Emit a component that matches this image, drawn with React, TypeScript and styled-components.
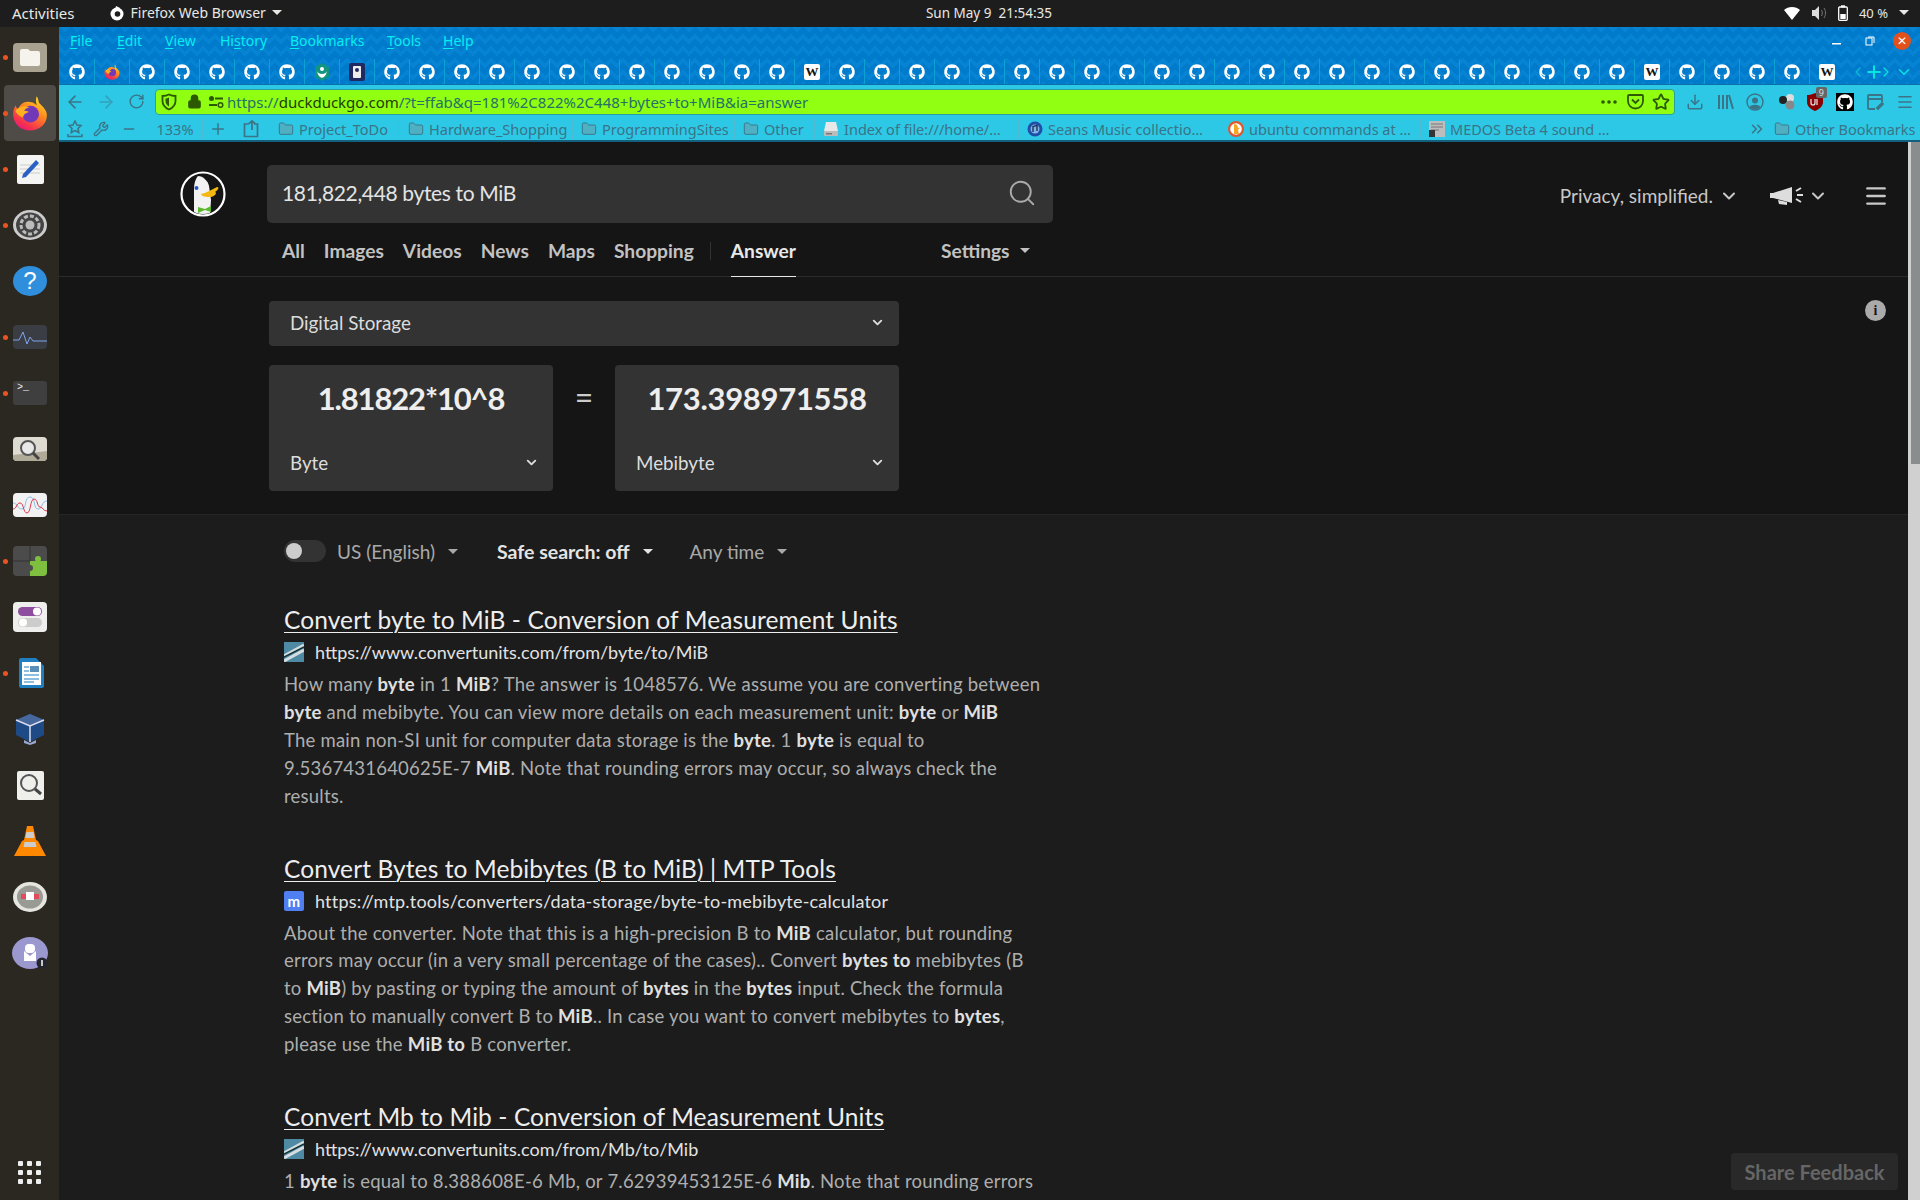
import React from "react";
import styled, { createGlobalStyle } from "styled-components";
import { FaGithub } from "react-icons/fa";
import {
  ArrowLeft, ArrowRight, RotateCw, Lock, Star, Download, Wrench, Minus, Plus, Folder, ChevronDown, ChevronLeft, ChevronRight, ChevronsRight, Search, Menu,
} from "lucide-react";

const Global = createGlobalStyle`
  html, body { margin: 0; padding: 0; background: #1c1c1c; overflow: hidden; }
  * { box-sizing: border-box; }
`;
const UI = `"Noto Sans", "Open Sans", sans-serif`;
const WEB = `Lato, "Open Sans", sans-serif`;

const Screen = styled.div`width:1920px;height:1200px;display:flex;flex-direction:column;overflow:hidden;font-family:${UI};`;
const TopBar = styled.header`height:27px;flex:none;background:#1d1d1d;color:#e8e8e4;display:grid;grid-template-columns:1fr auto 1fr;align-items:center;font-size:15px;padding:0 0 2px 12px;`;
const TopLeft = styled.div`display:flex;align-items:center;`;
const AppMenu = styled.div`display:flex;align-items:center;gap:6px;margin-left:34px;font-size:14px;`;
const Caret = styled.span<{ $c?: string }>`display:inline-block;width:0;height:0;border-left:5px solid transparent;border-right:5px solid transparent;border-top:5.500px solid ${p => p.$c || "currentColor"};`;
const Clock = styled.div`white-space:pre;font-size:13.500px;padding-left:46px;`;
const Tray = styled.div`display:flex;align-items:center;justify-content:flex-end;gap:11px;padding-right:11px;font-size:13px;`;
const Body = styled.div`flex:1;display:flex;min-height:0;`;
const Dock = styled.nav`width:59px;flex:none;background:#2b2822;display:flex;flex-direction:column;padding-top:2px;`;
const DockItem = styled.div<{ $active?: boolean; $running?: boolean }>`
  height:56px;flex:none;display:flex;align-items:center;justify-content:center;position:relative;margin-left:4px;width:52px;
  background:${p => (p.$active ? "#4f4c47" : "transparent")};border-radius:4px;
  ${p => (p.$running ? `&::before{content:"";position:absolute;left:-1px;top:50%;margin-top:-2.5px;width:5px;height:5px;border-radius:50%;background:#e95420;}` : "")}
`;
const DockGrid = styled.div`margin-top:auto;height:56px;display:grid;grid-template-columns:repeat(3,5px);grid-auto-rows:5px;gap:4px;justify-content:center;align-content:center;`;
const Dot = styled.i`background:#eee;border-radius:1px;display:block;`;
const Browser = styled.main`flex:1;min-width:0;display:flex;flex-direction:column;`;
const Strip = styled.div`
  height:58px;flex:none;background-color:#007acb;border-bottom:1px solid #0b6fa8;
  background-image:linear-gradient(135deg,#0683d2 25%,transparent 25%),linear-gradient(225deg,#0683d2 25%,transparent 25%),linear-gradient(315deg,#0683d2 25%,transparent 25%),linear-gradient(45deg,#0683d2 25%,transparent 25%);
  background-size:12px 12px;background-position:-6px 0,-6px 0,0 0,0 0;
  display:flex;flex-direction:column;
`;
const MenuRow = styled.div`height:27px;flex:none;display:flex;align-items:center;`;
const MenuLead = styled.span`width:11px;flex:none;`;
const MenuItem = styled.span<{ $w: number }>`width:${p => p.$w}px;flex:none;color:#05eef0;font-size:14px;u{text-underline-offset:2px;}`;
const WinControls = styled.div`margin-left:auto;display:flex;align-items:center;padding-right:9px;`;
const WinBtn = styled.span`width:33px;display:flex;justify-content:center;`;
const Close = styled.span`width:18px;height:18px;border-radius:50%;background:#e2501c;color:#fff;display:flex;align-items:center;justify-content:center;margin-left:7px;font-size:12px;`;
const TabRow = styled.div`height:25px;flex:none;display:flex;align-items:center;margin-top:5px;`;
const Tab = styled.div<{ $first?: boolean }>`width:35px;height:25px;flex:none;display:flex;align-items:center;justify-content:center;border-left:${p => (p.$first ? "none" : "1px solid #0aa2d2")};color:#fff;`;
const Wiki = styled.span`width:16px;height:16px;background:#fff;color:#111;border-radius:2px;font:700 13px "Liberation Serif",serif;display:flex;align-items:center;justify-content:center;`;
const TabTools = styled.div`display:flex;align-items:center;color:#07e5e0;`;
const NavRow = styled.div`height:30px;flex:none;background:#2dc8e6;display:flex;align-items:center;padding-top:3px;color:#3a7486;`;
const NavBtn = styled.span<{ $w: number; $dim?: boolean }>`width:${p => p.$w}px;flex:none;display:flex;align-items:center;justify-content:center;opacity:${p => (p.$dim ? 0.45 : 1)};position:relative;`;
const UrlBar = styled.div`width:1520px;height:26px;flex:none;background:#90ff11;border:1px solid #2aa0a0;border-radius:4px;display:flex;align-items:center;color:#2d5a00;`;
const UrlText = styled.div`flex:1;font-size:15px;color:#25706a;white-space:nowrap;margin-left:-1px;b{font-weight:400;color:#1e3c00;}`;
const UrlIcon = styled.span<{ $w: number }>`width:${p => p.$w}px;flex:none;display:flex;align-items:center;justify-content:center;`;
const UrlGap = styled.span`width:2px;flex:none;`;
const Badge = styled.span`position:absolute;top:-6px;right:-1px;background:#666;color:#ddd;font-size:9px;line-height:11px;padding:0 3px;border-radius:2px;`;
const GitBadge = styled.span`background:#000;color:#fff;display:flex;padding:1px;`;
const BookmarksRow = styled.div`height:27px;flex:none;background:#2dc8e6;border-bottom:2px solid #155f7e;display:flex;align-items:center;color:#3a7486;font-size:14.500px;white-space:nowrap;padding-top:2px;`;
const Sep = styled.span`width:1px;height:20px;background:#4fb9d0;flex:none;`;
const BmItem = styled.div<{ $w: number }>`width:${p => p.$w}px;flex:none;display:flex;align-items:center;gap:5px;padding-left:8px;overflow:hidden;`;
const BmSpacer = styled.div`flex:1;`;
const ZoomText = styled.span`width:54px;text-align:center;flex:none;`;
const Viewport = styled.div`flex:1;min-height:0;display:flex;position:relative;`;
const Page = styled.div`flex:1;min-width:0;display:flex;flex-direction:column;font-family:${WEB};`;
const Header = styled.section`height:135px;flex:none;background:#151515;border-bottom:1px solid #2b2b2b;display:flex;flex-direction:column;`;
const HeadRow = styled.div`display:flex;align-items:center;padding:23px 0 0 121px;height:81px;`;
const LogoBox = styled.div`width:46px;height:46px;flex:none;margin-right:41px;`;
const SearchBox = styled.div`width:786px;height:58px;background:#333;border-radius:5px;color:#e4e4e4;font-size:21px;letter-spacing:-.35px;display:flex;align-items:center;justify-content:space-between;padding:0 16px 3px 15px;`;
const RightTools = styled.div`margin-left:auto;display:flex;align-items:center;color:#c8c8c8;padding:3px 19px 0 0;`;
const Privacy = styled.span`font-size:19px;margin-right:6px;`;
const TabsRow = styled.div`height:53px;display:flex;align-items:stretch;padding-left:223px;font-size:19.200px;font-weight:700;color:#c2c2c2;`;
const NavTab = styled.div<{ $active?: boolean; $ml: number }>`margin-left:${p => p.$ml}px;display:flex;align-items:center;padding-top:2px;color:${p => (p.$active ? "#e8e8e8" : "inherit")};border-bottom:1px solid ${p => (p.$active ? "#e8e8e8" : "transparent")};height:54px;gap:10px;`;
const NavSep = styled.span`width:1px;height:18px;background:#333;margin:19px 0 0 16px;`;
const Answer = styled.section`height:238px;flex:none;background:#151515;border-bottom:1px solid #262626;display:flex;justify-content:space-between;padding:24px 22px 0 210px;`;
const Conv = styled.div`width:630px;display:flex;flex-direction:column;gap:19px;`;
const Select = styled.div`height:45px;background:#333;border-radius:4px;display:flex;align-items:center;justify-content:space-between;padding:0 14px 2px 21px;color:#ddd;font-size:18.800px;`;
const ConvRow = styled.div`display:grid;grid-template-columns:284px 1fr 284px;`;
const ConvCard = styled.div`height:126px;background:#333;border-radius:4px;display:flex;flex-direction:column;justify-content:space-between;`;
const ConvValue = styled.div<{ $ls: number }>`text-align:center;color:#eee;font-size:31px;font-weight:700;padding-top:14px;letter-spacing:${p => p.$ls}px;`;
const ConvUnit = styled.div`display:flex;align-items:center;justify-content:space-between;padding:0 14px 17px 21px;color:#ddd;font-size:18.800px;`;
const Eq = styled.div`text-align:center;color:#ccc;font-size:32px;padding-top:12px;`;
const InfoDot = styled.div`width:21px;height:21px;border-radius:50%;background:#aaa;color:#1a1a1a;font:700 14px "Liberation Serif",serif;display:flex;align-items:center;justify-content:center;margin-top:-1px;`;
const Results = styled.section`flex:1;background:#1c1c1c;padding:21px 0 0 225px;min-height:0;overflow:hidden;`;
const Filters = styled.div`display:flex;align-items:center;height:30px;font-size:19px;color:#a9a9a9;margin-bottom:38px;`;
const Toggle = styled.span`width:42px;height:22px;background:#333;border-radius:11px;display:flex;align-items:center;padding-left:2px;margin-right:11px;&::before{content:"";width:16px;height:16px;border-radius:50%;background:#ccc;}`;
const Filter = styled.span<{ $strong?: boolean; $ml?: number }>`display:flex;align-items:center;gap:13px;margin-left:${p => p.$ml || 0}px;font-weight:${p => (p.$strong ? 700 : 400)};font-size:${p => (p.$strong ? 19.5 : 19)}px;color:${p => (p.$strong ? "#e4e4e4" : "#a9a9a9")};`;
const Result = styled.article`margin-bottom:42px;width:790px;`;
const Title = styled.a`display:block;color:#eee;font-size:24.500px;line-height:32px;text-decoration:underline;text-underline-offset:3px;text-decoration-thickness:1px;letter-spacing:.1px;`;
const UrlLine = styled.div<{ $ls?: number }>`display:flex;align-items:center;gap:11px;height:30px;color:#e2e2e2;font-size:18px;letter-spacing:${p => p.$ls || 0}px;margin-top:1px;`;
const Snippet = styled.p`margin:4px 0 0;color:#aeaeae;font-size:18.500px;line-height:27.900px;letter-spacing:.22px;white-space:nowrap;b{color:#e0e0e0;}`;
const MFav = styled.span`width:20px;height:20px;background:#4f7ff0;border-radius:2px;color:#fff;font-size:15px;font-weight:700;display:flex;align-items:center;justify-content:center;`;
const Feedback = styled.div`position:absolute;right:22px;bottom:10px;width:167px;height:37px;background:#292929;border-radius:4px;color:#666;font:700 20px ${WEB};display:flex;align-items:center;justify-content:center;`;
const Scroll = styled.aside`width:12px;flex:none;background:#d0d0d0;display:flex;justify-content:flex-end;`;
const Thumb = styled.div`width:9px;height:322px;background:#8a8d8d;`;

const FirefoxLogo = ({ s = 16 }: { s?: number }) => (
  <svg width={s} height={s} viewBox="0 0 32 32">
    <defs>
      <linearGradient id="ffg" x1="0.8" y1="0" x2="0.2" y2="1">
        <stop offset="0" stopColor="#ffe226" /><stop offset=".4" stopColor="#ff8a1e" /><stop offset=".8" stopColor="#f5304e" /><stop offset="1" stopColor="#e31587" />
      </linearGradient>
    </defs>
    <path d="M22 1c2 3 1 5 3 7 3 3 6 6 6 10 0 8-6.700 13.500-15 13.500S1 25.500 1 17c0-3.500 1-6 2.500-8 0 2 1 3 2 3.500C7 8.500 10 6 14 6c3 0 6 1 8 3-1-3-1-6 0-8z" fill="url(#ffg)" />
    <circle cx="16.500" cy="17" r="7.500" fill="#7139b8" />
    <path d="M3 14c3-4 8-5 13-3-3 0-5 2-5 3 2 0 4 1 4 1-3 1-5 2-5 5-3-1-6-3-7-6z" fill="#ffb01f" />
  </svg>
);
const WhiteFox = () => (
  <svg width="16" height="16" viewBox="0 0 16 16"><circle cx="8" cy="9" r="6.500" fill="#fff" /><circle cx="8.500" cy="9" r="2.800" fill="#1d1d1d" /><path d="M7 1l4 2-3 3-2-1z" fill="#fff" /></svg>
);
const FolderIcon = () => <Folder size={16} strokeWidth={1.4} fill="#4fb0c4" style={{ flex: "none" }} />;
const Wifi = () => <svg width="16" height="14" viewBox="0 0 16 14"><path d="M0 4C4 0 12 0 16 4L8 14z" fill="#fff" /></svg>;
const Speaker = () => <svg width="16" height="14" viewBox="0 0 16 14"><path d="M1 4h3l4-4v14l-4-4H1z" fill="#ddd" /><path d="M10.500 4c1 2 1 4 0 6M13 2c2 3 2 7 0 10" stroke="#777" fill="none" /></svg>;
const Battery = () => <svg width="10" height="16" viewBox="0 0 10 16"><rect x=".7" y="2" width="8.600" height="13.300" rx="1" fill="none" stroke="#fff" strokeWidth="1.300" /><rect x="3" y=".3" width="4" height="2" fill="#fff" /><rect x="2.300" y="9" width="5.400" height="5" fill="#fff" /></svg>;
const ShieldIcon = () => <svg width="16" height="18" viewBox="0 0 16 18"><path d="M8 1.500c2 1 4 1.500 6.500 1.500v5c0 4-3 7-6.500 8.500C4.500 15 1.500 12 1.500 8V3C4 3 6 2.500 8 1.500z" fill="none" stroke="#2d5a00" strokeWidth="1.800" /><path d="M8 4.500v9C6 12.500 4.500 10.500 4.500 8V5.500c1.300 0 2.300-.4 3.500-1z" fill="#2d5a00" /></svg>;
const InfoPerm = () => <svg width="16" height="14" viewBox="0 0 16 14"><circle cx="3.500" cy="3.500" r="2.500" fill="#2d5a00" /><rect x="7" y="2.500" width="8" height="2" fill="#2d5a00" /><rect x="1" y="9" width="8" height="2" fill="#2d5a00" /><circle cx="12.500" cy="10" r="2.300" fill="none" stroke="#2d5a00" strokeWidth="1.500" /></svg>;
const Pocket = () => <svg width="17" height="17" viewBox="0 0 17 17"><path d="M2 2h13a1 1 0 011 1v5a7.500 7.500 0 01-15 0V3a1 1 0 011-1z" fill="none" stroke="#2d5a00" strokeWidth="1.800" /><path d="M5 6.500l3.500 3.500L12 6.500" fill="none" stroke="#2d5a00" strokeWidth="1.800" /></svg>;
const Library = () => <svg width="17" height="16" viewBox="0 0 17 16" fill="none" stroke="#3a7486" strokeWidth="2"><path d="M2 1v14M6 1v14M10 1v14M12 1l4 14" /></svg>;
const Person = () => <svg width="18" height="18" viewBox="0 0 18 18"><circle cx="9" cy="9" r="8" fill="none" stroke="#3a7486" strokeWidth="1.400" /><circle cx="9" cy="7.500" r="3" fill="#3a7486" /><path d="M3.500 14c2-3 9-3 11 0-3 3-8 3-11 0z" fill="#3a7486" /></svg>;
const Balls = () => <svg width="18" height="18" viewBox="0 0 18 18"><circle cx="12" cy="5" r="4" fill="#ddd" /><circle cx="5" cy="7" r="4" fill="#222" /><circle cx="12" cy="12" r="4.500" fill="#888" /></svg>;
const UBlock = () => <svg width="16" height="18" viewBox="0 0 16 18"><path d="M8 0c3 1.500 5 2 8 2v7c0 4-3 7-8 9-5-2-8-5-8-9V2c3 0 5-.5 8-2z" fill="#800" /><path d="M4 6v4a2 2 0 004 0V6M10 6v6" stroke="#eee" strokeWidth="1.200" fill="none" /></svg>;
const ShotIcon = () => <svg width="18" height="18" viewBox="0 0 18 18" fill="none" stroke="#3a7486" strokeWidth="1.800"><path d="M9 16H3a1 1 0 01-1-1V3a1 1 0 011-1h12a1 1 0 011 1v6M2 6h14" /><path d="M11 15l5-5 1 1-5 5z" fill="#3a7486" /></svg>;
const BmStar = () => <svg width="16" height="18" viewBox="0 0 16 18" fill="none" stroke="#3a7486" strokeWidth="1.500"><path d="M8 1l2 4 4 .5-3 3 .8 4L8 10.500 4.200 12.500 5 8.500l-3-3L6 5z" /><path d="M1 14v2.500h14V14" /></svg>;
const Share = () => <svg width="18" height="18" viewBox="0 0 18 18" fill="none" stroke="#3a7486" strokeWidth="1.700"><path d="M7 4H2.500v12.500h13V4H12M10 10V1M7 3.500L10 1l3 2.500" /></svg>;
const HardDisk = () => <svg width="16" height="16" viewBox="0 0 16 16"><path d="M3 1h10l2 9H1z" fill="#e8e8e8" /><rect x="1" y="10" width="14" height="5" rx="1" fill="#bbb" /><rect x="3" y="12" width="6" height="1.500" fill="#777" /></svg>;
const MusicFav = () => <svg width="16" height="16" viewBox="0 0 16 16"><circle cx="8" cy="8" r="7.500" fill="#1f4fa8" /><circle cx="8" cy="8" r="4.500" fill="#7fb4ea" /><path d="M6 11V5.500l4-1V10" stroke="#10203a" strokeWidth="1.200" fill="none" /></svg>;
const DuckFav = () => <svg width="16" height="16" viewBox="0 0 16 16"><circle cx="8" cy="8" r="8" fill="#de5833" /><circle cx="8" cy="8" r="5.800" fill="#fff" /><path d="M6 3c3 0 4 2 4 4l2-.5L10 9l1 4H6z" fill="#f5a623" /></svg>;
const MedosFav = () => <svg width="16" height="16" viewBox="0 0 16 16"><rect width="16" height="16" fill="#bdbdbd" /><path d="M2 3h12M2 6h12M2 9h8" stroke="#777" /><rect y="9" width="6" height="7" fill="#333" /></svg>;
const UnitsFav = () => <svg width="20" height="20" viewBox="0 0 20 20"><rect width="20" height="20" fill="#4f8aa5" /><path d="M0 14L20 3M0 19L20 8" stroke="#d5dde0" strokeWidth="3" /><path d="M0 15L20 5" stroke="#133" strokeWidth="1.500" /></svg>;
const Duck = () => (
  <svg width="46" height="46" viewBox="0 0 46 46">
    <circle cx="23" cy="23" r="21.500" fill="#151515" stroke="#fff" strokeWidth="2.200" />
    <clipPath id="dc"><circle cx="23" cy="23" r="20" /></clipPath>
    <g clipPath="url(#dc)">
      <path d="M14 46V18c0-6 2-11 4-13 5 0 10 5 11 10l2 14-1 17z" fill="#f2f2f2" />
      <circle cx="16.500" cy="17" r="2" fill="#2a58c0" />
      <path d="M21 23c5-1 10-4 16-7 3 0 1 3-2 5 2 0 1 4-4 5-5 0-9 0-10-3z" fill="#f5b80f" />
      <path d="M18 36l7 2 6-3v6l-6-2-7 3z" fill="#5cb82e" />
    </g>
  </svg>
);
const Megaphone = () => <svg width="36" height="22" viewBox="0 0 36 22" fill="#ddd"><path d="M0 8h3l19-6v16L3 13H0z" /><path d="M8 15l9 2v3l-8-1z" /><path d="M26 6l5-3M27 10h6M26 14l5 3" stroke="#ddd" strokeWidth="2" /></svg>;

const Tile = styled.div<{ $bg: string; $w?: number; $h?: number; $r?: number }>`width:${p => p.$w || 34}px;height:${p => p.$h || 30}px;background:${p => p.$bg};border-radius:${p => p.$r ?? 4}px;display:flex;align-items:center;justify-content:center;overflow:hidden;`;
const Term = styled.div`width:34px;height:24px;background:#3f3f3f;border-radius:3px;color:#eee;font:10px "Liberation Mono",monospace;padding:1px 4px;`;

const dockIcons: [React.ReactNode, boolean?, boolean?][] = [
  [<Tile $bg="#a9a290" $h={29}><svg width="22" height="18" viewBox="0 0 22 18"><path d="M1 3a2 2 0 012-2h6l2 2h8a2 2 0 012 2v11a2 2 0 01-2 2H3a2 2 0 01-2-2z" fill="#f6f3ec" /></svg></Tile>, true],
  [<FirefoxLogo s={36} />, true, true],
  [<Tile $bg="#f4f4f2" $w={27} $h={29} $r={2}><svg width="24" height="24" viewBox="0 0 24 24"><path d="M2 8h20M2 12h20M2 16h20" stroke="#ccc" /><path d="M5 17L18 3l3 3L8 20l-4 1z" fill="#2a5fc4" /></svg></Tile>, true],
  [<svg width="34" height="30" viewBox="0 0 34 30"><ellipse cx="17" cy="15" rx="17" ry="15" fill="#ccc" /><ellipse cx="17" cy="15" rx="14" ry="12.500" fill="#444" /><circle cx="17" cy="15" r="9" fill="none" stroke="#bbb" strokeWidth="3" strokeDasharray="4 2" /><circle cx="17" cy="15" r="4.500" fill="#bbb" /></svg>, true],
  [<svg width="34" height="30" viewBox="0 0 34 30"><ellipse cx="17" cy="15" rx="17" ry="15" fill="#2f8fdc" /><text x="17" y="23" textAnchor="middle" fontSize="24" fontFamily="Liberation Sans" fill="#fff">?</text></svg>],
  [<Tile $bg="#3a3d44" $h={24}><svg width="34" height="24" viewBox="0 0 34 24"><path d="M0 15h6l4-8 4 12 3-7 3 4h14" stroke="#7ea5e8" fill="none" /></svg></Tile>, true],
  [<Term>&gt;_</Term>, true],
  [<Tile $bg="#dedbd2" $h={24}><svg width="34" height="24" viewBox="0 0 34 24"><path d="M0 18l34-4v10H0z" fill="#b0aa98" /><circle cx="15" cy="11" r="7" fill="#e8e8e8" stroke="#555" strokeWidth="2" /><path d="M20 16l6 6" stroke="#444" strokeWidth="3" /></svg></Tile>],
  [<Tile $bg="#f2f2f2" $h={24}><svg width="34" height="24" viewBox="0 0 34 24" fill="none"><path d="M0 10c5 0 4 6 9 6s2-12 8-12 3 12 8 12 3-8 9-8" stroke="#8ebde8" /><path d="M0 16c4 0 3-6 7-6s3 10 7 10 3-14 7-14 3 8 6 8 3 4 7 4" stroke="#d8394f" /></svg></Tile>],
  [<Tile $bg="#4b4b4b" $h={30}><svg width="34" height="30" viewBox="0 0 34 30"><path d="M17 15h17v15H17z" fill="#7fbf3f" /><circle cx="25" cy="13" r="3" fill="#7fbf3f" /><circle cx="17" cy="22" r="3" fill="#4b4b4b" /><path d="M17 0v15H0" stroke="#333" fill="none" /></svg></Tile>, true],
  [<Tile $bg="#eeeeec" $h={30}><svg width="24" height="22" viewBox="0 0 24 22"><rect y="1" width="24" height="9" rx="4.500" fill="#8e4d9e" /><circle cx="19" cy="5.500" r="4" fill="#fff" /><rect y="12" width="24" height="9" rx="4.500" fill="#ccc" /><circle cx="5" cy="16.500" r="4" fill="#fff" /></svg></Tile>],
  [<svg width="27" height="30" viewBox="0 0 27 30"><path d="M2 2a2 2 0 012-2h15l8 8v20a2 2 0 01-2 2H4a2 2 0 01-2-2z" fill="#1f7fc0" /><rect x="5" y="4" width="19" height="23" fill="#fff" /><path d="M7 9h5M7 13h5M7 17h15M7 21h15M7 24h10" stroke="#1f7fc0" /><rect x="13" y="8" width="9" height="6" fill="#5b8fb8" /></svg>, true],
  [<svg width="32" height="32" viewBox="0 0 32 32"><path d="M16 1l14 6v15l-14 7-14-7V7z" fill="#1e4a86" /><path d="M2 7l14-6 14 6-14 6z" fill="#47689c" /><path d="M2 7l14 6 14-6M16 13v16" stroke="#dde" strokeWidth="1.500" fill="none" /><path d="M10 27l6 3 6-3v3l-6 2-6-2z" fill="#9aa6d0" /></svg>],
  [<Tile $bg="#efefeb" $w={27} $h={29} $r={2}><svg width="26" height="26" viewBox="0 0 26 26" fill="none"><circle cx="12" cy="11" r="8" stroke="#555" strokeWidth="2" /><path d="M18 17l6 5" stroke="#444" strokeWidth="3" /></svg></Tile>],
  [<svg width="32" height="32" viewBox="0 0 32 32"><path d="M13 1h6l3 14 2 1 8 15H0l8-15 2-1z" fill="#ff8800" /><path d="M12.500 7h7l1 6h-9zM10.500 17h11l1 5h-13z" fill="#ccc" /></svg>],
  [<svg width="34" height="30" viewBox="0 0 34 30"><ellipse cx="17" cy="15" rx="17" ry="15" fill="#e6e6e0" /><ellipse cx="17" cy="15" rx="13" ry="11.500" fill="#9a9a94" /><rect x="8" y="12" width="18" height="5" fill="#e34b5a" /><rect x="13" y="10" width="8" height="8" fill="#fff" /></svg>],
  [<svg width="36" height="32" viewBox="0 0 36 32"><ellipse cx="18" cy="16" rx="18" ry="16" fill="#9b98cf" /><path d="M12 14l6 5 6-5v10H12z" fill="#fff" /><rect x="13" y="7" width="10" height="9" rx="4" fill="#fff" /><circle cx="30" cy="26" r="5.500" fill="#23262e" /><path d="M30 23v6" stroke="#fff" strokeWidth="1.500" /></svg>],
];

const tabKind = (i: number) => {
  if (i === 1) return <FirefoxLogo />;
  if (i === 7) return <svg width="16" height="18" viewBox="0 0 16 18"><path d="M8 0l7 4v10l-7 4-7-4V4z" fill="#129480" /><circle cx="8" cy="6" r="2" fill="#fff" /><path d="M3 8c1 4 9 4 10 0-1 5-3 6-5 7-2-1-4-2-5-7z" fill="#fff" /></svg>;
  if (i === 8) return <svg width="16" height="18" viewBox="0 0 16 18"><rect width="16" height="18" rx="2" fill="#1f2a60" /><rect x="4" y="3" width="8" height="12" rx="1" fill="#eee" /><circle cx="8" cy="7" r="2" fill="#1f2a60" /></svg>;
  if (i === 21 || i === 45 || i === 50) return <Wiki>W</Wiki>;
  return <FaGithub size={16} />;
};
const menu: [string, string, string, number][] = [
  ["", "F", "ile", 47], ["", "E", "dit", 48], ["", "V", "iew", 55], ["Hi", "s", "tory", 70], ["", "B", "ookmarks", 97], ["", "T", "ools", 56], ["", "H", "elp", 50],
];
const ic = { strokeWidth: 2 };

export default function App() {
  return (
    <Screen>
      <Global />
      <TopBar>
        <TopLeft>Activities
          <AppMenu><WhiteFox />Firefox Web Browser<Caret /></AppMenu>
        </TopLeft>
        <Clock>Sun May 9  21:54:35</Clock>
        <Tray><Wifi /><Speaker /><Battery />40 %<Caret /></Tray>
      </TopBar>
      <Body>
        <Dock>
          {dockIcons.map(([icon, running, active], i) => (
            <DockItem key={i} $running={running} $active={active}>{icon}</DockItem>
          ))}
          <DockGrid>{Array.from({ length: 9 }, (_, i) => <Dot key={i} />)}</DockGrid>
        </Dock>
        <Browser>
          <Strip>
            <MenuRow>
              <MenuLead />
              {menu.map(([a, u, b, w]) => <MenuItem key={b} $w={w}>{a}<u>{u}</u>{b}</MenuItem>)}
              <WinControls>
                <WinBtn><svg width="10" height="10"><rect y="7" width="9" height="1.500" fill="#fff" /></svg></WinBtn>
                <WinBtn><svg width="10" height="10"><rect x="1" y="2" width="6" height="7" fill="none" stroke="#fff" /><path d="M3 1h6v6" fill="none" stroke="#fff" /></svg></WinBtn>
                <Close>✕</Close>
              </WinControls>
            </MenuRow>
            <TabRow>
              {Array.from({ length: 51 }, (_, i) => <Tab key={i} $first={i === 0}>{tabKind(i)}</Tab>)}
              <TabTools>
                <ChevronLeft size={16} style={{ opacity: .6, marginLeft: 6 }} />
                <Plus size={20} strokeWidth={2.5} style={{ marginLeft: -2 }} />
                <ChevronRight size={16} style={{ marginLeft: -6 }} />
                <ChevronDown size={18} style={{ marginLeft: 1 }} />
              </TabTools>
            </TabRow>
          </Strip>
          <NavRow>
            <NavBtn $w={32}><ArrowLeft size={20} {...ic} /></NavBtn>
            <NavBtn $w={30} $dim><ArrowRight size={20} {...ic} /></NavBtn>
            <NavBtn $w={30}><RotateCw size={17} {...ic} /></NavBtn>
            <NavBtn $w={4} />
            <UrlBar>
              <UrlIcon $w={26}><ShieldIcon /></UrlIcon>
              <UrlIcon $w={24}><Lock size={15} fill="#2d5a00" strokeWidth={2.2} /></UrlIcon>
              <UrlIcon $w={20}><InfoPerm /></UrlIcon>
              <UrlGap />
              <UrlText>https://<b>duckduckgo.com</b>/?t=ffab&amp;q=181%2C822%2C448+bytes+to+MiB&amp;ia=answer</UrlText>
              <UrlIcon $w={26}><svg width="16" height="4"><circle cx="2" cy="2" r="1.800" fill="#2d5a00" /><circle cx="8" cy="2" r="1.800" fill="#2d5a00" /><circle cx="14" cy="2" r="1.800" fill="#2d5a00" /></svg></UrlIcon>
              <UrlIcon $w={26}><Pocket /></UrlIcon>
              <UrlIcon $w={26}><Star size={18} strokeWidth={2.4} /></UrlIcon>
            </UrlBar>
            <NavBtn $w={5} />
            <NavBtn $w={30}><Download size={18} {...ic} /></NavBtn>
            <NavBtn $w={30}><Library /></NavBtn>
            <NavBtn $w={30}><Person /></NavBtn>
            <NavBtn $w={34}><Balls /></NavBtn>
            <NavBtn $w={22}><UBlock /><Badge>9</Badge></NavBtn>
            <NavBtn $w={38}><GitBadge><FaGithub size={16} /></GitBadge></NavBtn>
            <NavBtn $w={22}><ShotIcon /></NavBtn>
            <NavBtn $w={38}><Menu size={18} {...ic} /></NavBtn>
          </NavRow>
          <BookmarksRow>
            <NavBtn $w={32}><BmStar /></NavBtn>
            <NavBtn $w={20}><Wrench size={16} {...ic} /></NavBtn>
            <NavBtn $w={36}><Minus size={16} {...ic} /></NavBtn>
            <Sep />
            <ZoomText>133%</ZoomText>
            <Sep />
            <NavBtn $w={30}><Plus size={18} {...ic} /></NavBtn>
            <NavBtn $w={36}><Share /></NavBtn>
            <Sep />
            <BmItem $w={129}><FolderIcon />Project_ToDo</BmItem>
            <Sep />
            <BmItem $w={172}><FolderIcon />Hardware_Shopping</BmItem>
            <Sep />
            <BmItem $w={161}><FolderIcon />ProgrammingSites</BmItem>
            <Sep />
            <BmItem $w={79}><FolderIcon />Other</BmItem>
            <Sep />
            <BmItem $w={203}><HardDisk />Index of file:///home/…</BmItem>
            <Sep />
            <BmItem $w={200}><MusicFav />Seans Music collectio…</BmItem>
            <Sep />
            <BmItem $w={200}><DuckFav />ubuntu commands at …</BmItem>
            <Sep />
            <BmItem $w={190}><MedosFav />MEDOS Beta 4 sound …</BmItem>
            <Sep />
            <BmSpacer />
            <NavBtn $w={18}><ChevronsRight size={18} {...ic} /></NavBtn>
            <BmItem $w={154}><FolderIcon />Other Bookmarks</BmItem>
          </BookmarksRow>
          <Viewport>
            <Page>
              <Header>
                <HeadRow>
                  <LogoBox><Duck /></LogoBox>
                  <SearchBox>181,822,448 bytes to MiB<Search size={30} color="#aaa" strokeWidth={1.5} /></SearchBox>
                  <RightTools>
                    <Privacy>Privacy, simplified.</Privacy>
                    <ChevronDown size={20} strokeWidth={2.4} style={{ marginRight: 31 }} />
                    <Megaphone />
                    <ChevronDown size={20} strokeWidth={2.4} style={{ margin: "0 35px 0 2px" }} />
                    <Menu size={26} strokeWidth={2.2} />
                  </RightTools>
                </HeadRow>
                <TabsRow>
                  <NavTab $ml={0}>All</NavTab>
                  <NavTab $ml={19}>Images</NavTab>
                  <NavTab $ml={19}>Videos</NavTab>
                  <NavTab $ml={19}>News</NavTab>
                  <NavTab $ml={19}>Maps</NavTab>
                  <NavTab $ml={19}>Shopping</NavTab>
                  <NavSep />
                  <NavTab $ml={20} $active>Answer</NavTab>
                  <NavTab $ml={145}>Settings<Caret $c="#c2c2c2" /></NavTab>
                </TabsRow>
              </Header>
              <Answer>
                <Conv>
                  <Select>Digital Storage<ChevronDown size={15} strokeWidth={3} /></Select>
                  <ConvRow>
                    <ConvCard>
                      <ConvValue $ls={-1.15}>1.81822*10^8</ConvValue>
                      <ConvUnit>Byte<ChevronDown size={15} strokeWidth={3} /></ConvUnit>
                    </ConvCard>
                    <Eq>=</Eq>
                    <ConvCard>
                      <ConvValue $ls={-0.3}>173.398971558</ConvValue>
                      <ConvUnit>Mebibyte<ChevronDown size={15} strokeWidth={3} /></ConvUnit>
                    </ConvCard>
                  </ConvRow>
                </Conv>
                <InfoDot>i</InfoDot>
              </Answer>
              <Results>
                <Filters>
                  <Toggle />
                  <Filter>US (English)<Caret /></Filter>
                  <Filter $strong $ml={39}>Safe search: off<Caret /></Filter>
                  <Filter $ml={37}>Any time<Caret /></Filter>
                </Filters>
                <Result>
                  <Title>Convert byte to MiB - Conversion of Measurement Units</Title>
                  <UrlLine><UnitsFav />https://www.convertunits.com/from/byte/to/MiB</UrlLine>
                  <Snippet>
                    How many <b>byte</b> in 1 <b>MiB</b>? The answer is 1048576. We assume you are converting between<br />
                    <b>byte</b> and mebibyte. You can view more details on each measurement unit: <b>byte</b> or <b>MiB</b><br />
                    The main non-SI unit for computer data storage is the <b>byte</b>. 1 <b>byte</b> is equal to<br />
                    9.5367431640625E-7 <b>MiB</b>. Note that rounding errors may occur, so always check the<br />
                    results.
                  </Snippet>
                </Result>
                <Result>
                  <Title>Convert Bytes to Mebibytes (B to MiB) | MTP Tools</Title>
                  <UrlLine $ls={0.2}><MFav>m</MFav>https://mtp.tools/converters/data-storage/byte-to-mebibyte-calculator</UrlLine>
                  <Snippet>
                    About the converter. Note that this is a high-precision B to <b>MiB</b> calculator, but rounding<br />
                    errors may occur (in a very small percentage of the cases).. Convert <b>bytes to</b> mebibytes (B<br />
                    to <b>MiB</b>) by pasting or typing the amount of <b>bytes</b> in the <b>bytes</b> input. Check the formula<br />
                    section to manually convert B to <b>MiB</b>.. In case you want to convert mebibytes to <b>bytes</b>,<br />
                    please use the <b>MiB to</b> B converter.
                  </Snippet>
                </Result>
                <Result>
                  <Title>Convert Mb to Mib - Conversion of Measurement Units</Title>
                  <UrlLine><UnitsFav />https://www.convertunits.com/from/Mb/to/Mib</UrlLine>
                  <Snippet>
                    1 <b>byte</b> is equal to 8.388608E-6 Mb, or 7.62939453125E-6 <b>Mib</b>. Note that rounding errors
                  </Snippet>
                </Result>
              </Results>
            </Page>
            <Scroll><Thumb /></Scroll>
            <Feedback>Share Feedback</Feedback>
          </Viewport>
        </Browser>
      </Body>
    </Screen>
  );
}
